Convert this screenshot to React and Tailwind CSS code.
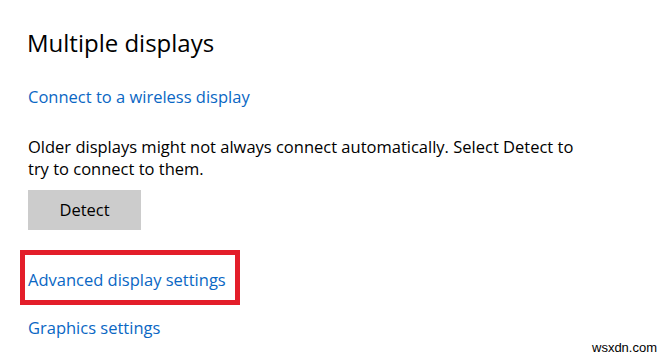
import React from "react";

const linkCls = "text-[#0a67c4] text-[16.5px] leading-[22px]";

const App = () => {
    return (
        <div className="relative w-[666px] h-[358px] bg-white overflow-hidden" style={{ fontFamily: '"Open Sans", "Noto Sans", sans-serif' }}>
            <div className="pl-[28px] pt-[27px] flex flex-col items-start">
                <h1 className="text-[24px] leading-[32px] text-black -ml-[1px]">Multiple displays</h1>

                <a className={`${linkCls} mt-[27px]`}>Connect to a wireless display</a>

                <p className="mt-[28px] w-[570px] text-[16.5px] leading-[22px] text-black">
                    Older displays might not always connect automatically. Select Detect to try to connect to them.
                </p>

                <button className="mt-[10px] w-[113px] h-[40px] bg-[#cccccc] text-[16.5px] text-black">
                    Detect
                </button>

                {/* highlighted link */}
                <div className="mt-[20px] -ml-[8px] w-[220px] h-[55px] border-[5px] border-[#e31e2a] pl-[3px] pt-[13px]">
                    <a className={`${linkCls} whitespace-nowrap`}>Advanced display settings</a>
                </div>

                <a className={`${linkCls} mt-[12px]`}>Graphics settings</a>
            </div>

            <span className="absolute left-[592px] top-[340px] text-[13px] leading-[16px] text-black" style={{ fontFamily: '"Liberation Sans", sans-serif' }}>
                wsxdn.com
            </span>
        </div>
    );
};

export default App;
